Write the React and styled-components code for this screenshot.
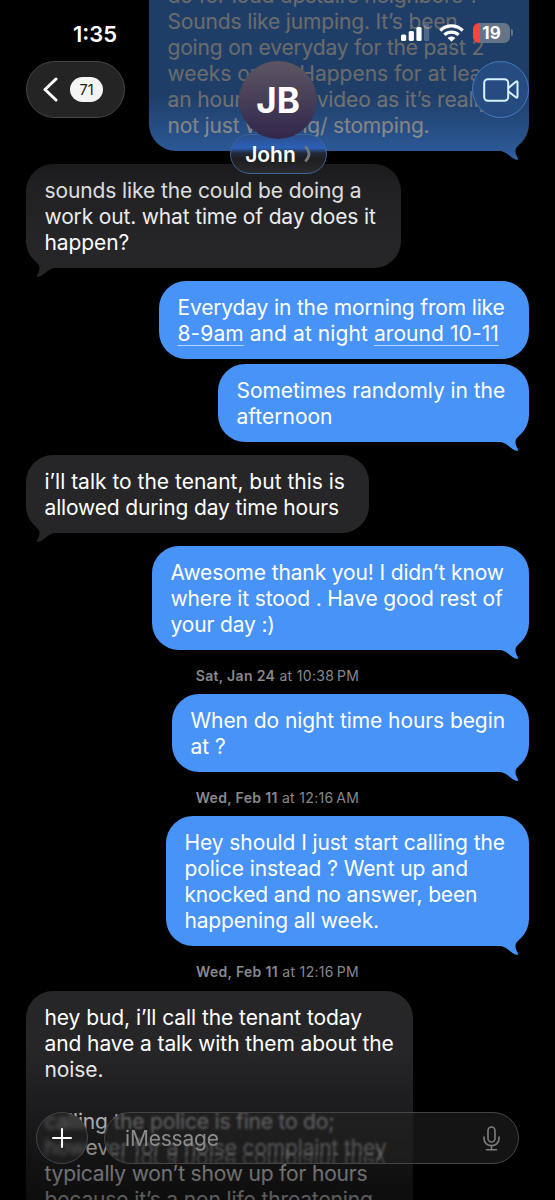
import React from "react";
import styled, { createGlobalStyle } from "styled-components";

const GlobalStyle = createGlobalStyle`
  * {
    box-sizing: border-box;
  }
  body {
    margin: 0;
    background: #000;
  }
`;

// each line is [text, letter-spacing]; _..._ marks a detected link
const messages = [
  {
    from: "me",
    width: 380,
    tail: true,
    gap: 0,
    lines: [
      ["do for loud upstairs neighbors ?", -0.1],
      ["Sounds like jumping. It’s been", -0.15],
      ["going on everyday for the past 2", -0.18],
      ["weeks or so. Happens for at least", 0],
      ["an hour. I have video as it’s really", -0.12],
      ["not just walking/ stomping.", -0.17],
    ],
  },
  {
    from: "them",
    width: 375,
    tail: true,
    gap: 13,
    lines: [
      ["sounds like the could be doing a", -0.11],
      ["work out. what time of day does it", -0.16],
      ["happen?", -0.1],
    ],
  },
  {
    from: "me",
    width: 370,
    gap: 13,
    lines: [
      ["Everyday in the morning from like", -0.16],
      ["_8-9am_ and at night _around 10-11_", 0.08],
    ],
  },
  {
    from: "me",
    width: 311,
    tail: true,
    gap: 5,
    lines: [
      ["Sometimes randomly in the", -0.06],
      ["afternoon", 0],
    ],
  },
  {
    from: "them",
    width: 343,
    tail: true,
    gap: 13,
    lines: [
      ["i’ll talk to the tenant, but this is", 0],
      ["allowed during day time hours", -0.15],
    ],
  },
  {
    from: "me",
    width: 377,
    tail: true,
    gap: 13,
    lines: [
      ["Awesome thank you! I didn’t know", -0.14],
      ["where it stood . Have good rest of", -0.13],
      ["your day :)", -0.15],
    ],
  },
  { day: "Sat, Jan 24", time: "at 10:38\u2009PM" },
  {
    from: "me",
    width: 357,
    tail: true,
    gap: 0,
    lines: [
      ["When do night time hours begin", -0.08],
      ["at ?", 0],
    ],
  },
  { day: "Wed, Feb 11", time: "at 12:16\u2009AM" },
  {
    from: "me",
    width: 363,
    tail: true,
    gap: 0,
    lines: [
      ["Hey should I just start calling the", -0.08],
      ["police instead ? Went up and", -0.09],
      ["knocked and no answer, been", -0.16],
      ["happening all week.", -0.17],
    ],
  },
  { day: "Wed, Feb 11", time: "at 12:16\u2009PM" },
  {
    from: "them",
    width: 387,
    gap: 1,
    lines: [
      ["hey bud, i’ll call the tenant today", -0.07],
      ["and have a talk with them about the", -0.1],
      ["noise.", -0.1],
      ["", 0],
      ["calling the police is fine to do;", -0.19],
      ["however for a noise complaint they", -0.16],
      ["typically won’t show up for hours", -0.18],
      ["because it’s a non life threatening", -0.13],
    ],
  },
];

const Tail = () => (
  <TailIcon width="24" height="17" viewBox="0 0 24 17">
    <path d="M0 6C5 7.200 8 10.500 11.500 13C13.500 14.300 15.300 15.100 17 14.800C17.700 14.300 16.800 13 16 11.500C14.400 8.500 13.800 5 15.500 2.600C16.800 1 18.500 0 20 -2.500L8 -3L0 5Z" />
  </TailIcon>
);

const Message = ({ from, width, tail, gap, lines }) => (
  <Bubble $mine={from === "me"} $width={width} $gap={gap}>
    {lines.map(([text, tracking], i) => (
      <Line key={i} $tracking={tracking}>
        {text
          .split("_")
          .map((part, j) => (j % 2 ? <Link key={j}>{part}</Link> : part))}
      </Line>
    ))}
    {tail && <Tail />}
  </Bubble>
);

const App = () => {
  return (
    <Phone>
      <GlobalStyle />
      <Feed>
        {messages.map((item, i) =>
          item.day ? (
            <Stamp key={i}>
              <b>{item.day}</b> {item.time}
            </Stamp>
          ) : (
            <Message key={i} {...item} />
          )
        )}
      </Feed>
      <TopFade />
      <BottomFade />
      <Header>
        <StatusBar>
          <Clock>1:35</Clock>
          <StatusIcons>
            <svg width="29" height="17" viewBox="0 0 29 17" fill="#fff">
              <rect x="0" y="10.500" width="5.200" height="6.500" rx="1.500" />
              <rect x="7.700" y="7" width="5.200" height="10" rx="1.500" />
              <rect x="15.400" y="3" width="5.200" height="14" rx="1.500" />
              <rect x="23" y="0" width="5.200" height="17" rx="1.500" opacity=".22" />
            </svg>
            <svg width="25" height="18" viewBox="0 0 25 18" fill="none" stroke="#fff" strokeWidth="3.300">
              <path d="M1.300 6.600C7.500 .4 17.500 .4 23.700 6.600" />
              <path d="M5.400 10.900C9.500 7.100 15.500 7.100 19.600 10.900" />
              <path d="M12.500 17.800L8.700 14C10.800 12 14.200 12 16.300 14Z" fill="#fff" stroke="none" />
            </svg>
            <Battery>
              <BatteryBody>19</BatteryBody>
              <BatteryCap />
            </Battery>
          </StatusIcons>
        </StatusBar>
        <NavBar>
          <BackButton>
            <svg width="15" height="25" viewBox="0 0 15 25" fill="none" stroke="#fff" strokeWidth="3" strokeLinecap="round" strokeLinejoin="round">
              <path d="M13 2L2 12.500L13 23" />
            </svg>
            <Unread>71</Unread>
          </BackButton>
          <Contact>
            <Avatar>JB</Avatar>
            <NamePill>
              John
              <svg width="7" height="16" viewBox="0 0 7 16" fill="none" stroke="#77777c" strokeWidth="2.600">
                <path d="M1.200 .5C6.200 5.500 6.200 10.500 1.200 15.500" />
              </svg>
            </NamePill>
          </Contact>
          <VideoButton>
            <svg width="36" height="24" viewBox="0 0 36 24" fill="none" stroke="#d6f2ff" strokeWidth="2" strokeLinejoin="round">
              <rect x="1.200" y="1.200" width="24" height="21.600" rx="3.800" />
              <path d="M25.500 10L32.800 3.800Q34.500 2.600 34.500 4.500V18.500Q34.500 20.400 32.800 19.200L25.500 13.500" />
            </svg>
          </VideoButton>
        </NavBar>
      </Header>
      <Composer>
        <PlusButton>
          <svg width="20" height="20" viewBox="0 0 20 20" stroke="#fff" strokeWidth="2" strokeLinecap="round">
            <path d="M10 1V19M1 10H19" />
          </svg>
        </PlusButton>
        <Field>
          <Refraction aria-hidden>however for a noise complaint they</Refraction>
          <Placeholder>iMessage</Placeholder>
          <svg width="17" height="25" viewBox="0 0 17 25" fill="none" stroke="#7d7d80" strokeWidth="1.600" strokeLinecap="round">
            <rect x="5" y="1" width="7" height="15" rx="3.500" />
            <path d="M1 11V12.500C1 22 16 22 16 12.500V11M8.500 19.800V23.500M3.500 23.800H13.500" />
          </svg>
        </Field>
      </Composer>
    </Phone>
  );
};

const Phone = styled.div`
  position: relative;
  width: 555px;
  height: 1200px;
  overflow: hidden;
  background: #000;
  color: #fff;
  font-family: Inter, "Liberation Sans", sans-serif;
`;

const Feed = styled.main`
  display: flex;
  flex-direction: column;
  padding: 0 26px;
  margin-top: -31px;
`;

const Bubble = styled.div`
  position: relative;
  flex: none;
  width: ${({ $width }) => $width}px;
  margin-top: ${({ $gap }) => $gap}px;
  align-self: ${({ $mine }) => ($mine ? "flex-end" : "flex-start")};
  padding: 14px 0 12px 18.5px;
  border-radius: 27px;
  background: ${({ $mine }) => ($mine ? "#4893f8" : "#262629")};

  & > svg {
    fill: ${({ $mine }) => ($mine ? "#4893f8" : "#262629")};
    ${({ $mine }) => ($mine ? "right: 4px;" : "left: 4px; transform: scaleX(-1);")}
  }
`;

const TailIcon = styled.svg`
  position: absolute;
  bottom: -11px;
`;

const Line = styled.div`
  height: 26px;
  line-height: 26px;
  font-size: 21px;
  letter-spacing: ${({ $tracking }) => $tracking}px;
  white-space: pre;
`;

const Link = styled.span`
  text-decoration: underline;
  text-decoration-thickness: 1px;
  text-underline-offset: 4px;
  text-decoration-color: rgba(255, 255, 255, 0.6);
`;

const Stamp = styled.div`
  height: 44px;
  padding-top: 17px;
  line-height: 18px;
  font-size: 14px;
  letter-spacing: 0.32px;
  text-align: center;
  color: #88888d;

  b {
    font-weight: 600;
  }
`;

const TopFade = styled.div`
  position: absolute;
  inset: 0 0 auto;
  height: 250px;
  background: linear-gradient(rgba(0, 0, 0, 0.58) 0 95px, rgba(0, 0, 0, 0.4) 150px, rgba(0, 0, 0, 0.15) 185px, transparent);
`;

const BottomFade = styled.div`
  position: absolute;
  inset: auto 0 0;
  height: 150px;
  background: linear-gradient(transparent, rgba(0, 0, 0, 0.3) 65px, rgba(0, 0, 0, 0.55) 120px, rgba(0, 0, 0, 0.65));
`;

const Header = styled.header`
  position: absolute;
  inset: 0 0 auto;
`;

const StatusBar = styled.div`
  display: flex;
  justify-content: space-between;
  height: 61px;
  padding: 21px 42px 0 73px;
`;

const Clock = styled.div`
  font-size: 22px;
  line-height: 26px;
  font-weight: 600;
`;

const StatusIcons = styled.div`
  display: flex;
  height: 23px;
  align-items: center;
  gap: 9px;
`;

const Battery = styled.div`
  display: flex;
  align-items: center;
  gap: 1px;
`;

const BatteryBody = styled.div`
  width: 37px;
  height: 20px;
  border-radius: 6px;
  background: linear-gradient(90deg, #f5453d 7px, #657487 7px);
  font-size: 17px;
  line-height: 20px;
  font-weight: 700;
  text-align: center;
`;

const BatteryCap = styled.div`
  width: 2px;
  height: 7px;
  border-radius: 0 3px 3px 0;
  background: #657487;
`;

const NavBar = styled.nav`
  display: flex;
  justify-content: space-between;
  padding: 0 26px;
`;

const BackButton = styled.div`
  display: flex;
  align-items: center;
  gap: 12px;
  width: 99px;
  height: 57px;
  padding-left: 16px;
  border: 1px solid #454547;
  border-radius: 29px;
  background: #242424;
`;

const Unread = styled.div`
  width: 33px;
  height: 25px;
  border-radius: 13px;
  background: #f4f4f4;
  color: #222;
  font-size: 14.5px;
  line-height: 25px;
  text-align: center;
`;

const Contact = styled.div`
  display: flex;
  flex-direction: column;
  align-items: center;
  width: 97px;
  margin-left: -41px;
`;

const Avatar = styled.div`
  z-index: 1;
  width: 78px;
  height: 78px;
  border-radius: 50%;
  background: linear-gradient(#5e5563, #30274c);
  font-size: 35px;
  line-height: 78px;
  font-weight: 700;
  text-align: center;
`;

const NamePill = styled.div`
  display: flex;
  align-items: center;
  justify-content: center;
  gap: 8px;
  width: 97px;
  height: 40px;
  margin-top: -5px;
  border: 1px solid #3d6598;
  border-radius: 20px;
  background: linear-gradient(#2a4f8c, #2c61b8 13px, #222a38 18px, #1e1e20 24px, #2b2b2d);
  font-size: 21px;
  font-weight: 600;
`;

const VideoButton = styled.div`
  display: flex;
  align-items: center;
  justify-content: center;
  width: 57px;
  height: 57px;
  border: 1px solid #4779bd;
  border-radius: 50%;
  background: #264b80;
`;

const Composer = styled.footer`
  position: absolute;
  inset: auto 36px 36px;
  display: flex;
  gap: 16px;
`;

const Glass = styled.div`
  position: relative;
  display: flex;
  align-items: center;
  height: 52px;
  overflow: hidden;
  border: 1px solid #454547;
  border-radius: 26px;
  background: rgba(36, 36, 37, 0.55);
  backdrop-filter: blur(1px);
`;

const PlusButton = styled(Glass)`
  justify-content: center;
  width: 52px;
  backdrop-filter: blur(2px);
`;

const Field = styled(Glass)`
  flex: 1;
  justify-content: space-between;
  padding: 0 18px 0 20px;
`;

// message text bent back by the lower rim of the glass
const Refraction = styled.span`
  position: absolute;
  left: -61px;
  bottom: -10px;
  font-size: 21px;
  line-height: 26px;
  letter-spacing: -0.16px;
  white-space: nowrap;
  color: rgba(255, 255, 255, 0.18);
  filter: blur(0.8px);
  transform: scaleY(-1);
`;

const Placeholder = styled.div`
  position: relative;
  color: #8c8c8e;
  font-size: 21px;
  letter-spacing: -0.2px;
`;

export default App;
